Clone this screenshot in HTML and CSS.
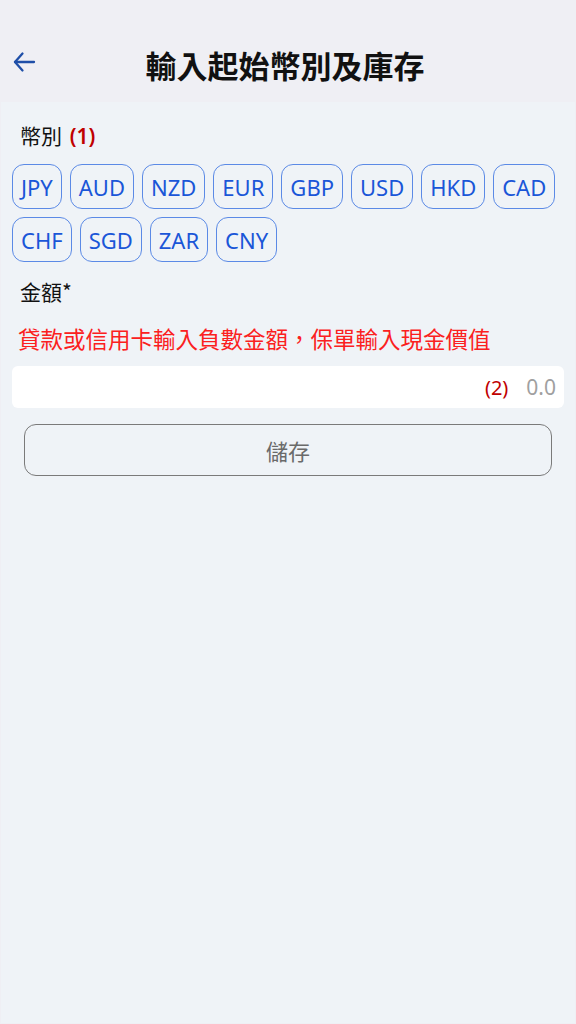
FILE: index.html
```html
<!DOCTYPE html>
<html lang="zh-TW">

<head>
    <meta charset="UTF-8">
    <meta name="viewport" content="width=device-width, initial-scale=1.0">
    <title>輸入起始幣別及庫存</title>
    <link rel="stylesheet" href="styles.css">
</head>

<body>
    <header class="topbar">
        <a class="back" href="#">
            <svg width="24" height="24" viewBox="0 0 24 24" fill="none" stroke="#1f4fa8" stroke-width="2.3" stroke-linecap="round" stroke-linejoin="round">
                <path d="M22 12H3"/>
                <path d="M10.5 3.5L3 12l7.5 8.5"/>
            </svg>
        </a>
        <h1 class="title">輸入起始幣別及庫存</h1>
    </header>

    <main class="content">
        <div class="label">幣別 <span class="mark strong">(1)</span></div>
        <ul class="chips">
            <li class="chip">JPY</li>
            <li class="chip">AUD</li>
            <li class="chip">NZD</li>
            <li class="chip">EUR</li>
            <li class="chip">GBP</li>
            <li class="chip">USD</li>
            <li class="chip">HKD</li>
            <li class="chip">CAD</li>
            <li class="chip">CHF</li>
            <li class="chip">SGD</li>
            <li class="chip">ZAR</li>
            <li class="chip">CNY</li>
        </ul>

        <div class="label amount-label">金額*</div>
        <p class="hint">貸款或信用卡輸入負數金額，保單輸入現金價值</p>

        <div class="input">
            <span class="mark">(2)</span>
            <span class="placeholder">0.0</span>
        </div>

        <button class="save">儲存</button>
    </main>
</body>

</html>
```

FILE: styles.css
```css
* {
    list-style-type: none;
    box-sizing: border-box;
    margin: 0;
    padding: 0;
}

html,
body {
    height: 100%;
}

body {
    display: flex;
    flex-direction: column;
    background: #efeff4;
    font-family: "Noto Sans", "Noto Sans CJK TC", sans-serif;
    color: #111;
}

.topbar {
    height: 102px;
    display: flex;
    align-items: center;
    position: relative;
    padding-top: 26px;
}

.back {
    position: absolute;
    left: 12px;
    top: 50px;
    display: flex;
}

.title {
    width: 100%;
    text-align: center;
    font-size: 31px;
    font-weight: bold;
    padding-right: 6px;
    font-family: "Noto Sans CJK TC", sans-serif;
}

.content {
    flex: 1;
    background: #eff3f7;
    margin: 0 1px 1px;
    padding: 18px 0 0;
}

.label {
    font-size: 21px;
    padding-left: 19px;
    line-height: 30px;
    font-family: "Noto Sans CJK TC", sans-serif;
}

.mark {
    color: #c00000;
    font-family: "Noto Sans", sans-serif;
}

.strong {
    font-weight: 600;
    margin-left: 3px;
}

.chips {
    display: flex;
    flex-wrap: wrap;
    gap: 8px;
    padding: 13px 11px 0 11px;
}

.chip {
    height: 45px;
    padding: 0 8px;
    border: 1px solid #5b8ae6;
    border-radius: 12px;
    color: #1a56d8;
    font-size: 22px;
    display: flex;
    align-items: center;
    font-family: "Noto Sans", sans-serif;
}

.amount-label {
    margin-top: 14px;
}

.hint {
    color: #fb2020;
    font-size: 22.5px;
    padding-left: 17px;
    margin-top: 16px;
    line-height: 32px;
    font-family: "Noto Sans CJK TC", sans-serif;
}

.input {
    margin: 12px 11px 0;
    height: 42px;
    background: #fff;
    border-radius: 6px;
    display: flex;
    align-items: center;
    justify-content: flex-end;
    gap: 18px;
    padding-right: 8px;
    font-size: 20px;
}

.placeholder {
    color: #a0a0a0;
    font-size: 21px;
}

.save {
    display: block;
    margin: 16px 23px 0;
    width: calc(100% - 46px);
    height: 52px;
    border: 1px solid #7a7a7a;
    border-radius: 12px;
    background: transparent;
    color: #6a6a6a;
    font-size: 22px;
    font-family: "Noto Sans CJK TC", sans-serif;
}
```
